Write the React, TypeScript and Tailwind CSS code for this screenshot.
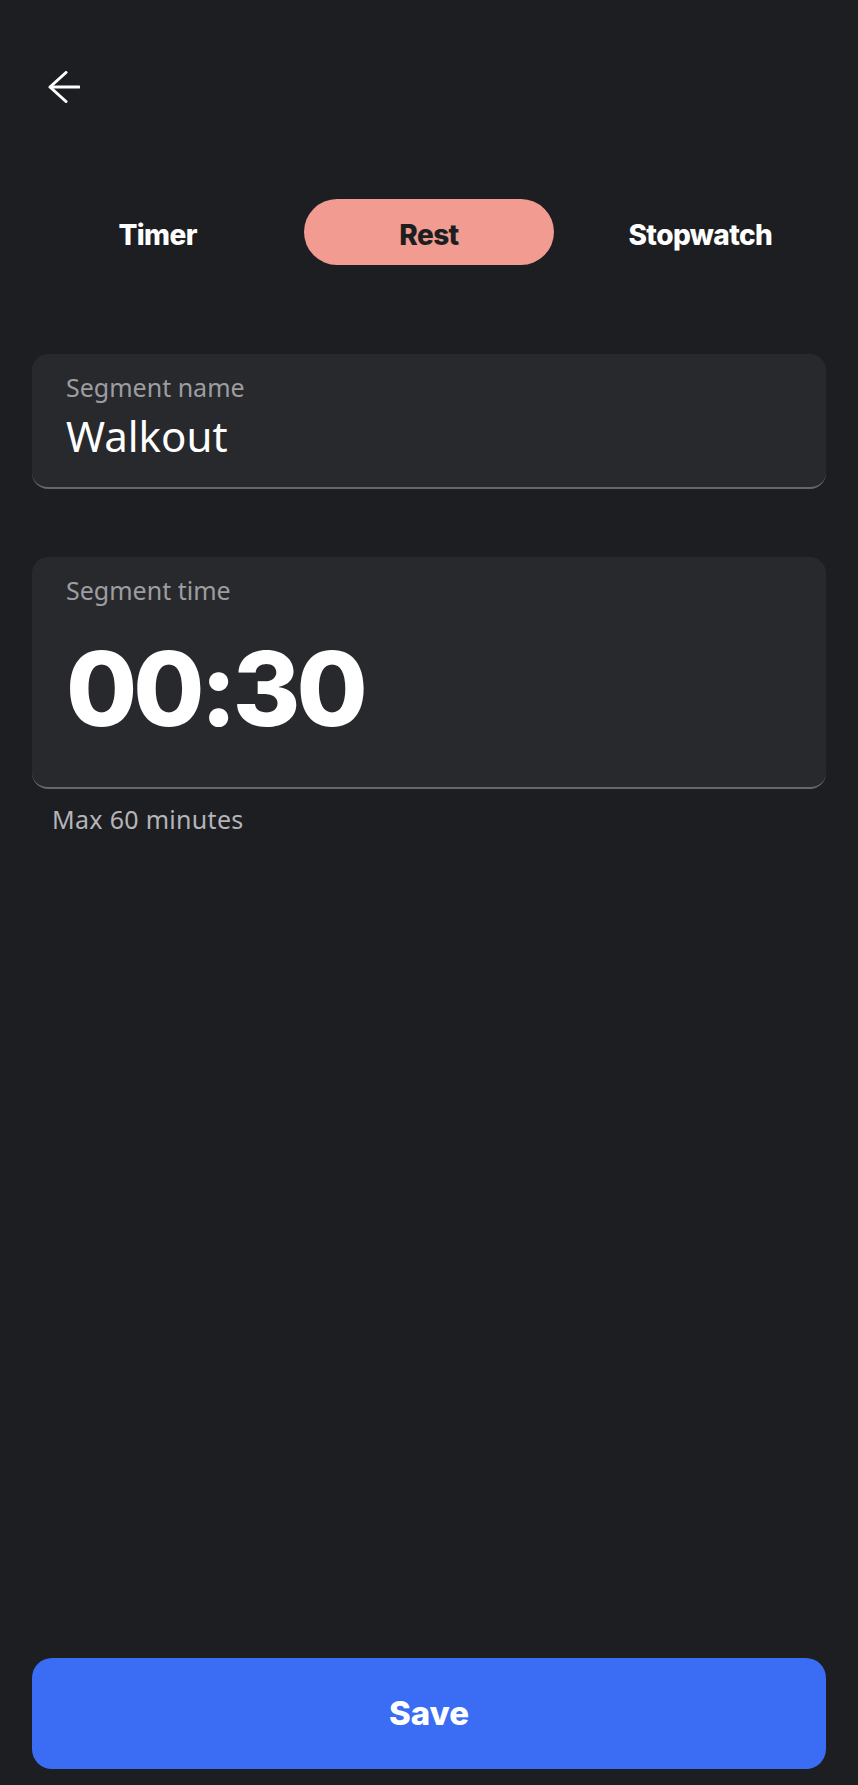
import React from "react";

export default function App() {
  return (
    <div className="w-[858px] h-[1785px] bg-[#1d1e21] flex flex-col font-['Noto_Sans',sans-serif]">
      <div className="pt-[71px] pl-[48px]">
        <svg width="32" height="32" viewBox="0 0 32 32" fill="none" stroke="#ffffff" strokeWidth="3" strokeLinecap="round" strokeLinejoin="round">
          <path d="M31 16 H2.5" />
          <path d="M18 1.5 L2 16 L18 30.5" />
        </svg>
      </div>

      <div className="mt-[96px] px-[22px] grid grid-cols-3">
        <div className="flex justify-center">
          <div className="w-[250px] h-[66px] pt-[5px] rounded-full flex items-center justify-center text-white text-[28px] font-extrabold font-['Inter',sans-serif] tracking-[-0.6px]">
            Timer
          </div>
        </div>
        <div className="flex justify-center">
          <div className="w-[250px] h-[66px] pt-[5px] rounded-full bg-[#f29b91] flex items-center justify-center text-[#1d1e21] text-[28px] font-extrabold font-['Inter',sans-serif] tracking-[-0.6px]">
            Rest
          </div>
        </div>
        <div className="flex justify-center">
          <div className="w-[250px] h-[66px] pt-[5px] rounded-full flex items-center justify-center text-white text-[28px] font-extrabold font-['Inter',sans-serif] tracking-[-0.6px]">
            Stopwatch
          </div>
        </div>
      </div>

      <div className="mt-[89px] mx-[32px] h-[135px] rounded-[16px] bg-[#28292d] border-b-2 border-[#67676b] px-[34px] pt-[17px] flex flex-col">
        <div className="text-[25px] leading-[32px] text-[#9d9da1]">Segment name</div>
        <div className="mt-[8px] text-[42px] leading-[50px] text-white">Walkout</div>
      </div>

      <div className="mt-[68px] mx-[32px] h-[232px] rounded-[16px] bg-[#28292d] border-b-2 border-[#67676b] px-[34px] pt-[17px] flex flex-col">
        <div className="text-[25px] leading-[32px] text-[#9d9da1]">Segment time</div>
        <div className="mt-[31px] text-[103px] leading-[104px] font-extrabold text-white font-['Inter',sans-serif] tracking-[-4px]">
          00:30
        </div>
      </div>

      <div className="mt-[14px] pl-[52px] text-[25px] leading-[32px] text-[#b4b4b9] tracking-[0.3px]">Max 60 minutes</div>

      <div className="flex-1" />

      <div className="mx-[32px] mb-[16px] h-[111px] rounded-[20px] bg-[#3a6cf4] flex items-center justify-center text-white text-[33px] font-extrabold font-['Inter',sans-serif]">
        Save
      </div>
    </div>
  );
}
